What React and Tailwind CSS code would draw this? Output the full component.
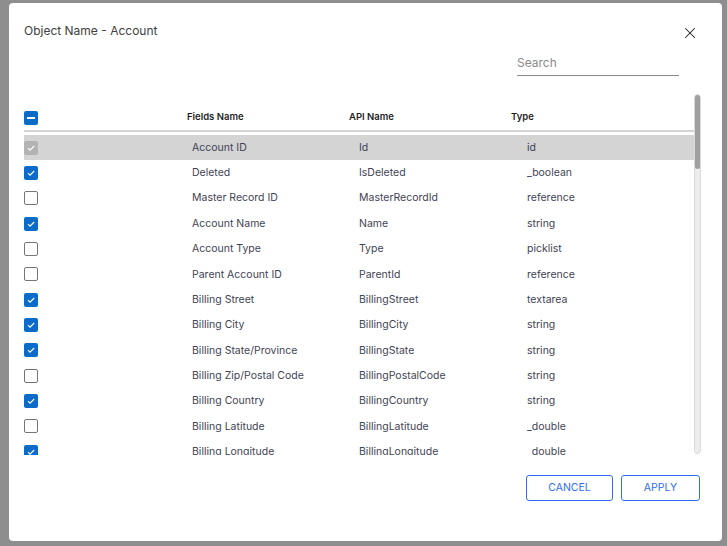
import { X } from 'lucide-react';

const rows = [
  { name: 'Account ID', api: 'Id', type: 'id', checked: true, disabled: true },
  { name: 'Deleted', api: 'IsDeleted', type: '_boolean', checked: true },
  { name: 'Master Record ID', api: 'MasterRecordId', type: 'reference', checked: false },
  { name: 'Account Name', api: 'Name', type: 'string', checked: true },
  { name: 'Account Type', api: 'Type', type: 'picklist', checked: false },
  { name: 'Parent Account ID', api: 'ParentId', type: 'reference', checked: false },
  { name: 'Billing Street', api: 'BillingStreet', type: 'textarea', checked: true },
  { name: 'Billing City', api: 'BillingCity', type: 'string', checked: true },
  { name: 'Billing State/Province', api: 'BillingState', type: 'string', checked: true },
  { name: 'Billing Zip/Postal Code', api: 'BillingPostalCode', type: 'string', checked: false },
  { name: 'Billing Country', api: 'BillingCountry', type: 'string', checked: true },
  { name: 'Billing Latitude', api: 'BillingLatitude', type: '_double', checked: false },
  { name: 'Billing Longitude', api: 'BillingLongitude', type: '_double', checked: true },
  { name: 'Shipping Street', api: 'ShippingStreet', type: 'textarea', checked: false },
];

function Check({ checked, disabled }) {
  if (!checked) {
    return <span className="block w-[14px] h-[14px] rounded-[2px] border border-[#767676] bg-white" />;
  }
  return (
    <span
      className={`flex items-center justify-center w-[14px] h-[14px] rounded-[2px] ${
        disabled ? 'bg-[#b3b3b3]' : 'bg-[#0a6bc8]'
      }`}
    >
      <svg width="10" height="10" viewBox="0 0 10 10" fill="none">
        <path d="M2 5.2 4 7.2 8.2 3" stroke="white" strokeWidth="1.1" />
      </svg>
    </span>
  );
}

export default function App() {
  return (
    <div
      className="w-[727px] h-[546px] bg-[#8e8e8e] pt-[3px] pl-[9px] overflow-hidden"
      style={{ fontFamily: 'Inter, Roboto, sans-serif' }}
    >
      <div className="w-[713px] h-[538px] bg-white rounded-[4px] flex flex-col">
        {/* Header */}
        <div className="flex justify-between items-start pt-[20px] pl-[15px] pr-[23px]">
          <h1 className="text-[12px] leading-4 text-[#404040]">Object Name - Account</h1>
          <button className="mt-[1px] text-[#222]">
            <X size={18} strokeWidth={1.4} />
          </button>
        </div>

        {/* Search */}
        <div className="flex justify-end pr-[43px] mt-[12px]">
          <input
            placeholder="Search"
            className="w-[162px] h-[22px] pb-[4px] text-[12px] text-[#333] placeholder:text-[#8a8a8a] border-b border-[#8c8c8c] outline-none bg-transparent"
          />
        </div>

        {/* Table */}
        <div className="flex mt-[18px] ml-[15px] h-[361px]">
          <div className="w-[670px] overflow-hidden pt-[11px]">
            <div className="flex items-center h-[27px] border-b-2 border-[#d3d3d3] text-[9.5px] font-semibold text-[#1f1f1f]">
              <div className="w-[163px]">
                <span className="flex items-center justify-center w-[14px] h-[14px] rounded-[2px] bg-[#0a6bc8]">
                  <span className="block w-[8px] h-[2px] bg-white" />
                </span>
              </div>
              <div className="w-[162px]">Fields Name</div>
              <div className="w-[162px]">API Name</div>
              <div>Type</div>
            </div>
            <div className="mt-[3px]">
              {rows.map((r) => (
                <div
                  key={r.api}
                  className={`flex items-center h-[25.35px] text-[10.5px] text-[#3f4354] ${
                    r.disabled ? 'bg-[#d4d4d4]' : ''
                  }`}
                >
                  <div className="w-[168px]">
                    <Check checked={r.checked} disabled={r.disabled} />
                  </div>
                  <div className="w-[167px]">{r.name}</div>
                  <div className="w-[168px]">{r.api}</div>
                  <div>{r.type}</div>
                </div>
              ))}
            </div>
          </div>
          {/* Scrollbar */}
          <div className="w-[7px] h-[360px] rounded-full bg-[#ececec] border border-[#dadada] flex flex-col">
            <div className="h-[74px] rounded-full bg-[#a19e9e]" />
          </div>
        </div>

        {/* Footer */}
        <div className="flex justify-end gap-[8px] pr-[22px] mt-[20px]">
          <button className="w-[87px] h-[26px] border border-[#2f6df5] rounded-[3px] text-[10.5px] text-[#2f6df5]">
            CANCEL
          </button>
          <button className="w-[79px] h-[26px] border border-[#2f6df5] rounded-[3px] text-[10.5px] text-[#2f6df5]">
            APPLY
          </button>
        </div>
      </div>
    </div>
  );
}
